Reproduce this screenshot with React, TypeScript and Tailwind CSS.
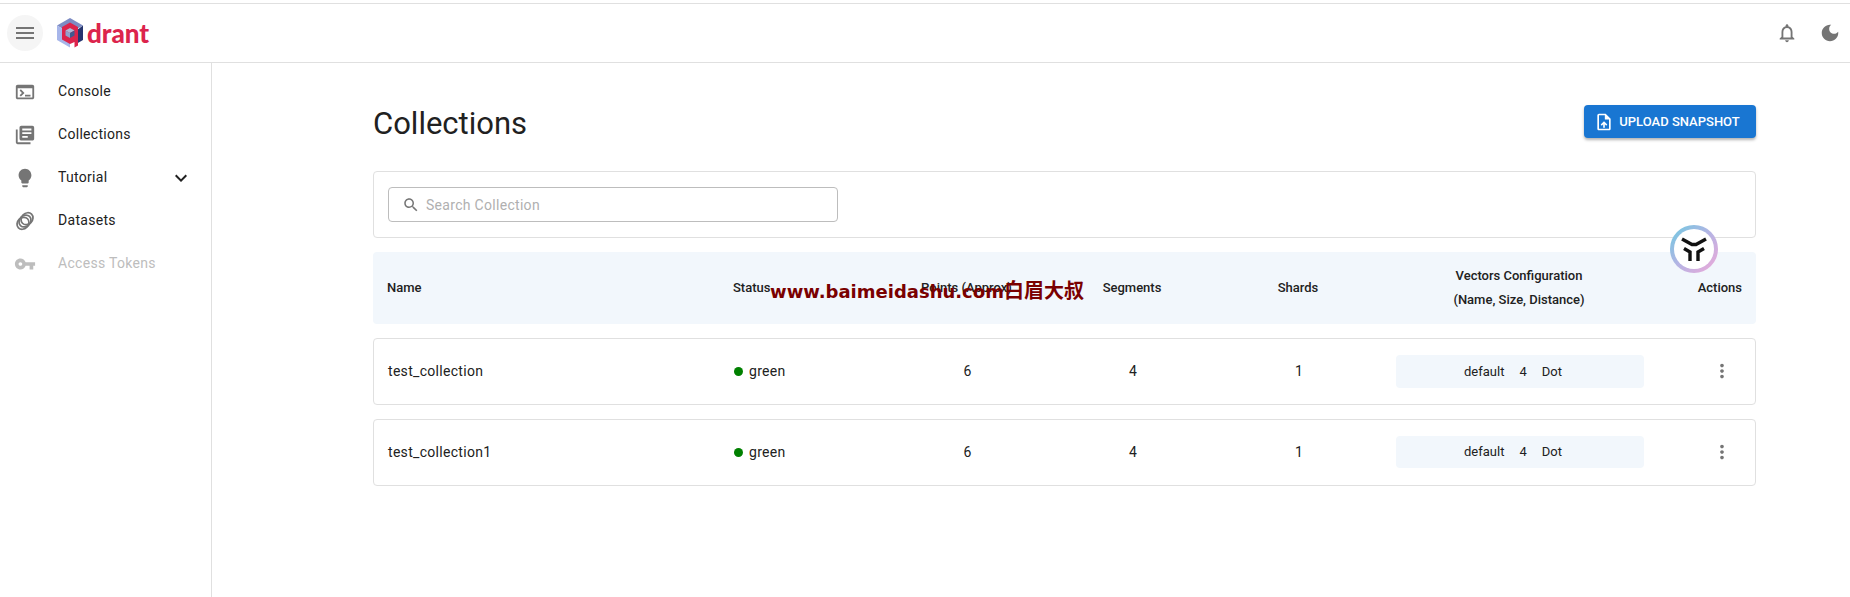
import React from 'react';

const Icon = ({ d, className }: { d: string; className?: string }) => (
  <svg viewBox="0 0 24 24" fill="currentColor" className={className}>
    <path d={d} />
  </svg>
);

const paths = {
  menu: 'M3 18h18v-2H3v2zm0-5h18v-2H3v2zm0-7v2h18V6H3z',
  terminal: 'M20 4H4c-1.11 0-2 .9-2 2v12c0 1.1.89 2 2 2h16c1.1 0 2-.9 2-2V6c0-1.1-.9-2-2-2zm0 14H4V8h16v10zm-2-1h-6v-2h6v2zM7.5 17l-1.41-1.41L8.67 13l-2.59-2.59L7.5 9l4 4-4 4z',
  library: 'M4 6H2v14c0 1.1.9 2 2 2h14v-2H4V6zm16-4H8c-1.1 0-2 .9-2 2v12c0 1.1.9 2 2 2h12c1.1 0 2-.9 2-2V4c0-1.1-.9-2-2-2zm-1 9H9V9h10v2zm-4 4H9v-2h6v2zm4-8H9V5h10v2z',
  bulb: 'M9 21c0 .55.45 1 1 1h4c.55 0 1-.45 1-1v-1H9v1zm3-19C8.14 2 5 5.14 5 9c0 2.38 1.19 4.47 3 5.74V17c0 .55.45 1 1 1h6c.55 0 1-.45 1-1v-2.26c1.81-1.27 3-3.36 3-5.74 0-3.86-3.14-7-7-7z',
  key: 'M12.65 10C11.83 7.67 9.61 6 7 6c-3.31 0-6 2.69-6 6s2.69 6 6 6c2.61 0 4.83-1.67 5.65-4H17v4h4v-4h2v-4H12.65zM7 14c-1.1 0-2-.9-2-2s.9-2 2-2 2 .9 2 2-.9 2-2 2z',
  expand: 'M16.59 8.59L12 13.17 7.41 8.59 6 10l6 6 6-6z',
  bell: 'M12 22c1.1 0 2-.9 2-2h-4c0 1.1.9 2 2 2zm6-6v-5c0-3.07-1.63-5.64-4.5-6.32V4c0-.83-.67-1.5-1.5-1.5s-1.5.67-1.5 1.5v.68C7.64 5.36 6 7.92 6 11v5l-2 2v1h16v-1l-2-2zm-2 1H8v-6c0-2.48 1.51-4.5 4-4.5s4 2.02 4 4.5v6z',
  moon: 'M12 3c-4.97 0-9 4.03-9 9s4.03 9 9 9 9-4.03 9-9c0-.46-.04-.92-.1-1.36-.98 1.37-2.58 2.26-4.4 2.26-2.98 0-5.4-2.42-5.4-5.4 0-1.81.89-3.42 2.26-4.4-.44-.06-.9-.1-1.36-.1z',
  upload: 'M14 2H6c-1.1 0-1.99.9-1.99 2L4 20c0 1.1.89 2 1.99 2H18c1.1 0 2-.9 2-2V8l-6-6zm4 18H6V4h7v5h5v11zM8 15.01l1.41 1.41L11 14.84V19h2v-4.16l1.59 1.59L16 15.01 12.01 11 8 15.01z',
  search: 'M15.5 14h-.79l-.28-.27C15.41 12.59 16 11.11 16 9.5 16 5.91 13.09 3 9.5 3S3 5.91 3 9.5 5.91 16 9.5 16c1.61 0 3.09-.59 4.23-1.57l.27.28v.79l5 4.99L20.49 19l-4.99-5zm-6 0C7.01 14 5 11.99 5 9.5S7.01 5 9.5 5 14 7.01 14 9.5 11.99 14 9.5 14z',
  more: 'M12 8c1.1 0 2-.9 2-2s-.9-2-2-2-2 .9-2 2 .9 2 2 2zm0 2c-1.1 0-2 .9-2 2s.9 2 2 2 2-.9 2-2-.9-2-2-2zm0 6c-1.1 0-2 .9-2 2s.9 2 2 2 2-.9 2-2-.9-2-2-2z',
};

const RingsIcon = ({ className }: { className?: string }) => (
  <svg viewBox="0 0 24 24" fill="none" stroke="currentColor" strokeWidth="1.9" className={className}>
    <ellipse cx="9.800" cy="14.500" rx="7" ry="6" transform="rotate(-45 9.800 14.500)" />
    <ellipse cx="12" cy="12" rx="7" ry="6" transform="rotate(-45 12 12)" />
    <ellipse cx="14.200" cy="9.500" rx="7" ry="6" transform="rotate(-45 14.200 9.500)" />
  </svg>
);

const Logo = () => (
  <svg viewBox="0 0 26 30" className="w-[26px] h-[30px]">
    {/* outer hexagon faces */}
    <path d="M13 0 26 7.500 13 15 0 7.500z" fill="#7d8cc4" />
    <path d="M0 7.500 13 15v14.500L0 22z" fill="#a7b6ea" />
    <path d="M26 7.500V22l-6 3.500V12z" fill="#26356f" />
    {/* pink q ring */}
    <path d="M13 4.500 21 9v18.500L17.500 29.500V24L13 26 5 21.500V9z" fill="#dc244c" />
    {/* inner cube */}
    <path d="M13 10 17.500 12.500 13 15 8.500 12.500z" fill="#aebbd8" />
    <path d="M8.500 12.500 13 15v5l-4.500-2.500z" fill="#8ea3cf" />
    <path d="M17.500 12.500V17.500L13 20v-5z" fill="#41598f" />
  </svg>
);

const navItems = [
  { label: 'Console', icon: <Icon d={paths.terminal} className="w-[22px] h-[22px]" /> },
  { label: 'Collections', icon: <Icon d={paths.library} className="w-[22px] h-[22px]" /> },
  { label: 'Tutorial', icon: <Icon d={paths.bulb} className="w-[22px] h-[22px]" />, expand: true },
  { label: 'Datasets', icon: <RingsIcon className="w-[22px] h-[22px]" /> },
  { label: 'Access Tokens', icon: <Icon d={paths.key} className="w-[22px] h-[22px]" />, disabled: true },
];

const rows = [
  { name: 'test_collection', h: 'h-[33px]' },
  { name: 'test_collection1', h: 'h-[32px] mb-[1px]' },
];

const cols = 'grid grid-cols-[346px_165px_165px_166px_166px_276px_1fr] items-center';

export default function App() {
  return (
    <div className="h-[597px] overflow-hidden bg-white text-[#212121] relative font-['Roboto',sans-serif]">
      <header className="mt-[3px] h-[60px] border-y border-[#e0e0e0] flex items-center pl-[7px] pr-[9px]">
        <button className="w-9 h-9 rounded-full bg-[#f5f5f5] flex items-center justify-center text-[#757575]">
          <Icon d={paths.menu} className="w-6 h-6" />
        </button>
        <div className="ml-[14px] flex items-center">
          <Logo />
          <span className="ml-[4px] text-[26px] leading-none font-black text-[#dc244c] font-['Lato',sans-serif]">drant</span>
        </div>
        <div className="ml-auto flex items-center gap-[21px] text-[#757575]">
          <Icon d={paths.bell} className="w-[22px] h-[22px]" />
          <Icon d={paths.moon} className="w-[22px] h-[22px]" />
        </div>
      </header>

      <div className="flex h-[534px]">
        <aside className="w-[212px] shrink-0 border-r border-[#e0e0e0] pt-[7px]">
          {navItems.map((item) => (
            <div
              key={item.label}
              className={`h-[43px] flex items-center pl-[14px] pr-[20px] ${item.disabled ? 'text-[#bdbdbd]' : ''}`}
            >
              <span className={`w-[44px] ${item.disabled ? 'text-[#bdbdbd]' : 'text-[#757575]'}`}>{item.icon}</span>
              <span className="text-[14px] tracking-[0.3px]">{item.label}</span>
              {item.expand && <Icon d={paths.expand} className="ml-auto w-6 h-6 text-[#212121] translate-x-[2px]" />}
            </div>
          ))}
        </aside>

        <main className="flex-1 pl-[161px] pr-[94px] pt-[42px]">
          <div className="flex items-center justify-between h-[33px]">
            <h1 className="text-[31px] leading-none mt-[4px]">Collections</h1>
            <button className="w-[172px] h-[33px] pr-[6px] rounded bg-[#1976d2] text-white text-[13px] font-medium flex items-center justify-center gap-[5px] shadow-[0_2px_3px_rgba(0,0,0,0.3)]">
              <Icon d={paths.upload} className="w-5 h-5" />
              UPLOAD SNAPSHOT
            </button>
          </div>

          <div className="mt-[33px] h-[67px] border border-[#e0e0e0] rounded flex items-center px-[14px]">
            <div className="w-[450px] h-[35px] border border-[#bdbdbd] rounded flex items-center pl-[13px]">
              <Icon d={paths.search} className="w-[18px] h-[18px] text-[#757575]" />
              <span className="ml-[6px] mt-[1px] text-[14px] tracking-[0.3px] text-[#b0b0b0]">Search Collection</span>
            </div>
          </div>

          <div className={`${cols} mt-[14px] h-[72px] bg-[#f2f7fc] rounded text-[13px] font-medium`}>
            <div className="pl-[14px]">Name</div>
            <div className="pl-[14px]">Status</div>
            <div className="text-center">Points (Approx)</div>
            <div className="text-center">Segments</div>
            <div className="text-center">Shards</div>
            <div className="text-center leading-[24px]">
              Vectors Configuration
              <br />
              (Name, Size, Distance)
            </div>
            <div className="text-right pr-[14px]">Actions</div>
          </div>

          {rows.map((row) => (
            <div key={row.name} className={`${cols} mt-[14px] h-[67px] border border-[#e0e0e0] rounded text-[14px]`}>
              <div className="pl-[14px] tracking-[0.3px]">{row.name}</div>
              <div className="pl-[14px] flex items-center tracking-[0.3px]">
                <span className="w-[9px] h-[9px] rounded-full bg-[#008000] mr-[6px]" />
                green
              </div>
              <div className="text-center">6</div>
              <div className="text-center">4</div>
              <div className="text-center">1</div>
              <div className={`${row.h} ml-[14px] w-[248px] bg-[#f2f7fc] rounded flex items-center justify-center gap-[15px] pr-[14px] text-[13px]`}>
                <span>default</span>
                <span>4</span>
                <span>Dot</span>
              </div>
              <div className="flex justify-end pr-[22px]">
                <Icon d={paths.more} className="w-[22px] h-[22px] text-[#757575] -translate-y-[1px]" />
              </div>
            </div>
          ))}
        </main>
      </div>

      {/* floating badge and watermark sit over the table */}
      <div className="absolute left-[1670px] top-[225px] w-12 h-12 rounded-full bg-[linear-gradient(135deg,#6cc9e0,#b6b4e4_50%,#f0a8d8)] flex items-center justify-center">
        <div className="w-10 h-10 rounded-full bg-white">
          <svg viewBox="10 10 40 40" className="w-10 h-10" fill="none" stroke="#111" strokeWidth="3.4">
            <path d="M18 20 28 25.500H32L42 20" />
            <path d="M20 29.500 26 33V42" />
            <path d="M40 29.500 34 33V42" />
          </svg>
        </div>
      </div>
      <div className="absolute left-[770px] top-[278px] text-[18px] leading-[26px] font-bold whitespace-nowrap text-[#7a0000] font-['DejaVu_Sans','Noto_Sans_CJK_SC',sans-serif]">
        www.baimeidashu.com<span className="text-[20px]">白眉大叔</span>
      </div>
    </div>
  );
}
